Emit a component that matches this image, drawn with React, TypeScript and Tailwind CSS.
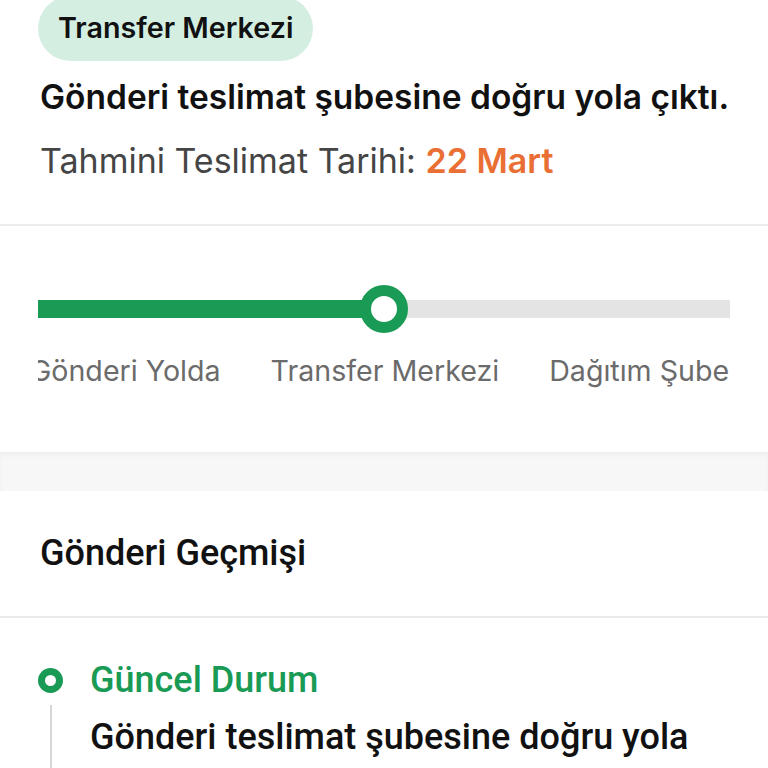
import React from 'react';

const steps = ['Gönderi Yolda', 'Transfer Merkezi', 'Dağıtım Şubesi'];

export default function App() {
    return (
        <div className="w-[768px] h-[768px] overflow-hidden bg-white font-['Inter','Noto_Sans',sans-serif]">
            {/* Summary */}
            <section className="px-[38px] pb-[43px] border-b-2 border-[#ececec]">
                <div className="-mt-[4px] inline-flex h-[65px] items-center rounded-full bg-[#d4efe2] px-[20px]">
                    <span className="text-[28.7px] font-semibold text-[#111] leading-none">Transfer Merkezi</span>
                </div>
                <h1 className="mt-[16px] text-[33.5px] leading-[40px] font-semibold text-[#111] pl-[2px] whitespace-nowrap">
                    Gönderi teslimat şubesine doğru yola çıktı.
                </h1>
                <p className="mt-[24px] text-[34px] leading-[40px] text-[#454545] pl-[2px]">
                    Tahmini Teslimat Tarihi: <span className="font-semibold text-[#ea6f35]">22 Mart</span>
                </p>
            </section>

            {/* Progress */}
            <section className="pt-[59px] pb-[64px] mx-[38px]">
                <div className="relative h-[48px] flex items-center">
                    <div className="flex w-full h-[18px]">
                        <div className="w-[346px] bg-[#199a55]"></div>
                        <div className="flex-1 bg-[#e4e4e4]"></div>
                    </div>
                    <div className="absolute left-[322px] top-0 w-[48px] h-[48px] rounded-full border-[11px] border-[#199a55] bg-white"></div>
                </div>
                <div className="mt-[21px] overflow-hidden">
                    <div className="flex gap-[50px] -ml-[8px]">
                        {steps.map((s) => (
                            <span key={s} className="shrink-0 whitespace-nowrap text-[28.6px] leading-[34px] text-[#6b6b6b]">
                                {s}
                            </span>
                        ))}
                    </div>
                </div>
            </section>

            <div className="h-[39px] bg-[#f7f7f7] shadow-[inset_0_3px_4px_rgba(0,0,0,0.04)]"></div>

            {/* History */}
            <section className="font-['Roboto',sans-serif]">
                <div className="px-[40px] pt-[42px] pb-[43px] border-b-2 border-[#e9e9e9]">
                    <h2 className="text-[36px] leading-[40px] font-medium text-[#111]">Gönderi Geçmişi</h2>
                </div>
                <div className="flex gap-[27px] px-[38px] pt-[50px]">
                    <div className="flex flex-col items-center w-[25px]">
                        <div className="w-[25px] h-[25px] rounded-full border-[7px] border-[#199a55]"></div>
                        <div className="mt-[12px] w-[2px] h-[200px] bg-[#d6d6d6]"></div>
                    </div>
                    <div className="-mt-[8px]">
                        <div className="text-[36px] leading-[40px] font-medium text-[#199a55]">Güncel Durum</div>
                        <div className="mt-[13px] text-[36px] leading-[48px] font-medium text-[#111]">
                            Gönderi teslimat şubesine doğru yola çıktı.
                        </div>
                    </div>
                </div>
            </section>
        </div>
    );
}
